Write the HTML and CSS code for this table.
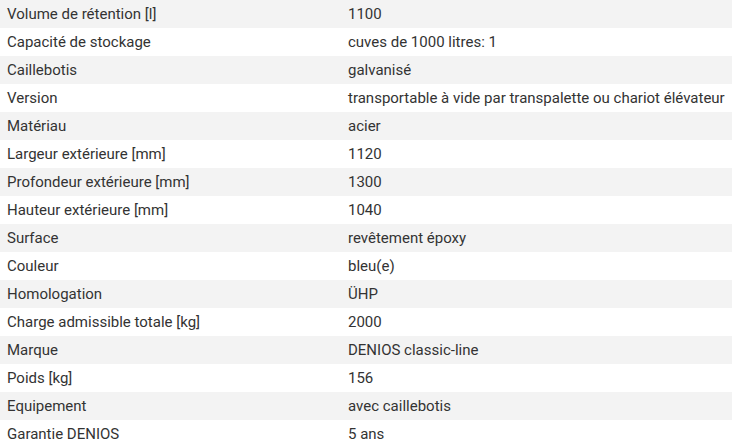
FILE: index.html
```html
<!DOCTYPE html>
<html lang="fr">
<head>
<meta charset="utf-8">
<link rel="stylesheet" href="styles.css">
</head>
<body>
<table class="specs">
<tbody>
<tr><td class="k">Volume de rétention [l]</td><td class="v">1100</td></tr>
<tr><td class="k">Capacité de stockage</td><td class="v">cuves de 1000 litres: 1</td></tr>
<tr><td class="k">Caillebotis</td><td class="v">galvanisé</td></tr>
<tr><td class="k">Version</td><td class="v">transportable à vide par transpalette ou chariot élévateur</td></tr>
<tr><td class="k">Matériau</td><td class="v">acier</td></tr>
<tr><td class="k">Largeur extérieure [mm]</td><td class="v">1120</td></tr>
<tr><td class="k">Profondeur extérieure [mm]</td><td class="v">1300</td></tr>
<tr><td class="k">Hauteur extérieure [mm]</td><td class="v">1040</td></tr>
<tr><td class="k">Surface</td><td class="v">revêtement époxy</td></tr>
<tr><td class="k">Couleur</td><td class="v">bleu(e)</td></tr>
<tr><td class="k">Homologation</td><td class="v">ÜHP</td></tr>
<tr><td class="k">Charge admissible totale [kg]</td><td class="v">2000</td></tr>
<tr><td class="k">Marque</td><td class="v">DENIOS classic-line</td></tr>
<tr><td class="k">Poids [kg]</td><td class="v">156</td></tr>
<tr><td class="k">Equipement</td><td class="v">avec caillebotis</td></tr>
<tr><td class="k">Garantie DENIOS</td><td class="v">5 ans</td></tr>
</tbody>
</table>
</body>
</html>
```
FILE: styles.css
```css
html, body {
  margin: 0;
  padding: 0;
  background: #ffffff;
}
body {
  font-family: Roboto, "Liberation Sans", Arial, sans-serif;
  font-size: 15px;
  color: #333333;
}
.specs {
  width: 732px;
  border-collapse: collapse;
  table-layout: fixed;
}
.specs tr {
  height: 28px;
}
.specs tr:nth-child(odd) {
  background: #f3f3f3;
}
.specs td {
  padding: 0;
  height: 28px;
  line-height: 28px;
  white-space: nowrap;
  vertical-align: middle;
}
.specs .k {
  width: 334px;
  padding-left: 7px;
}
.specs .v {
  padding-left: 7px;
}
```
